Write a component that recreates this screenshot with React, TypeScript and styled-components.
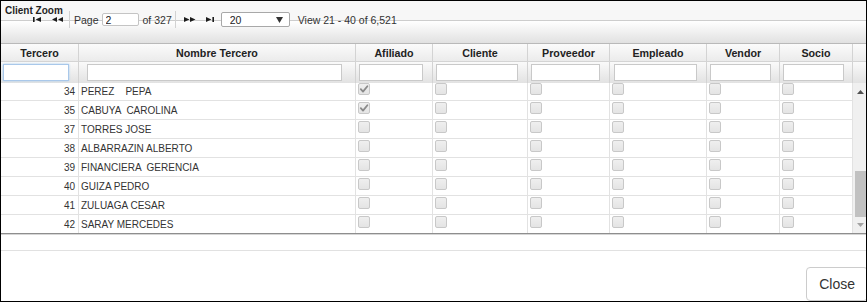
import React from 'react';
import styled, { createGlobalStyle } from 'styled-components';

const GlobalStyle = createGlobalStyle`
  html, body {
    margin: 0;
    padding: 0;
    background: #ffffff;
  }
  body {
    font-family: 'Liberation Sans', Arial, sans-serif;
  }
`;

type Column = {
  label: string;
  width: number;
  inLeft: number;
  inWidth: number;
  focused?: boolean;
};

type Tercero = {
  id: number;
  name: string;
  afiliado: boolean;
};

const columns: Column[] = [
  { label: 'Tercero', width: 78, inLeft: 2, inWidth: 66, focused: true },
  { label: 'Nombre Tercero', width: 277, inLeft: 8, inWidth: 255 },
  { label: 'Afiliado', width: 77, inLeft: 3, inWidth: 64 },
  { label: 'Cliente', width: 95, inLeft: 3, inWidth: 82 },
  { label: 'Proveedor', width: 82, inLeft: 3, inWidth: 69 },
  { label: 'Empleado', width: 97, inLeft: 4, inWidth: 83 },
  { label: 'Vendor', width: 73, inLeft: 3, inWidth: 61 },
  { label: 'Socio', width: 73, inLeft: 3, inWidth: 61 },
];

const rows: Tercero[] = [
  { id: 34, name: 'PEREZ    PEPA', afiliado: true },
  { id: 35, name: 'CABUYA  CAROLINA', afiliado: true },
  { id: 37, name: 'TORRES JOSE', afiliado: false },
  { id: 38, name: 'ALBARRAZIN ALBERTO', afiliado: false },
  { id: 39, name: 'FINANCIERA  GERENCIA', afiliado: false },
  { id: 40, name: 'GUIZA PEDRO', afiliado: false },
  { id: 41, name: 'ZULUAGA CESAR', afiliado: false },
  { id: 42, name: 'SARAY MERCEDES', afiliado: false },
];

const template = columns.map((c) => `${c.width}px`).join(' ');
const SCROLL_OFFSET = 1;

const Frame = styled.div`
  width: 867px;
  height: 302px;
  box-sizing: border-box;
  border: 1px solid #000000;
  overflow: hidden;
  display: flex;
  flex-direction: column;
  background: #ffffff;
  color: #333333;
`;

const TopBar = styled.div`
  flex: none;
  height: 42px;
  border-bottom: 1px solid #b9b9b9;
  background: linear-gradient(
    to bottom,
    #f7f7f7 0,
    #f7f7f7 19px,
    #cdcdcd 19px,
    #cdcdcd 20px,
    #ffffff 20px,
    #e1e1e1 100%
  );
`;

const Caption = styled.div`
  padding: 4px 0 0 4px;
  height: 12px;
  font-size: 10px;
  line-height: 12px;
  font-weight: 700;
  color: #1f1f1f;
`;

const Pager = styled.div`
  display: flex;
  align-items: center;
  height: 17px;
  margin: -6px 0 0 26px;
  font-size: 10.5px;
  color: #333333;
`;

const NavButton = styled.button`
  width: 20px;
  height: 17px;
  padding: 0;
  border: none;
  background: transparent;
  display: flex;
  align-items: center;
  justify-content: center;
  color: #1c1c1c;
  cursor: pointer;
`;

const Separator = styled.span<{ $before: number; $after: number }>`
  width: 1px;
  height: 17px;
  background: #d2d2d2;
  margin: 0 ${(p) => p.$after}px 0 ${(p) => p.$before}px;
`;

const PagerText = styled.span<{ $gap?: number }>`
  margin-left: ${(p) => p.$gap ?? 0}px;
  padding-top: 1px;
  white-space: nowrap;
`;

const PageInput = styled.input`
  width: 37px;
  height: 13px;
  box-sizing: border-box;
  margin: 0 0 0 3px;
  padding: 0 3px;
  border: 1px solid #c4c4c4;
  border-radius: 2px;
  font-family: inherit;
  font-size: 10.5px;
  color: #222222;
  background: #ffffff;
`;

const SelectBox = styled.label`
  display: flex;
  align-items: center;
  width: 69px;
  height: 15px;
  box-sizing: border-box;
  margin-left: 1px;
  padding: 0 6px 0 8px;
  border: 1px solid #a8a8a8;
  border-radius: 2px;
  background: #ffffff;
`;

const SelectControl = styled.select`
  flex: 1;
  min-width: 0;
  appearance: none;
  border: none;
  outline: none;
  padding: 0;
  background: transparent;
  font-family: inherit;
  font-size: 10.5px;
  color: #222222;
`;

const HeaderRow = styled.div`
  display: grid;
  grid-template-columns: ${template} 13px;
  height: 17px;
  border-bottom: 1px solid #d4d4d4;
  background: linear-gradient(to bottom, #fbfbfb, #ebebeb);
`;

const HeaderCell = styled.div`
  border-right: 1px solid #d3d3d3;
  padding-top: 2px;
  text-align: center;
  font-size: 10.7px;
  line-height: 15px;
  font-weight: 700;
  color: #222222;
  white-space: nowrap;
  overflow: hidden;
`;

const FilterRow = styled.div`
  display: grid;
  grid-template-columns: ${template} 13px;
  height: 22px;
  background: linear-gradient(to bottom, #fafafa, #e2e2e2);
`;

const FilterCell = styled.div`
  border-right: 1px solid #d3d3d3;
  padding-top: 2px;
`;

const FilterInput = styled.input<{ $left: number; $width: number; $focused?: boolean }>`
  display: block;
  width: ${(p) => p.$width}px;
  height: 17px;
  box-sizing: border-box;
  margin: 0 0 0 ${(p) => p.$left}px;
  padding: 0 3px;
  border: 1px solid ${(p) => (p.$focused ? '#a9c8ea' : '#c9c9c9')};
  box-shadow: ${(p) => (p.$focused ? '0 0 2px #a9cdf0' : 'none')};
  background: #ffffff;
  font-family: inherit;
  font-size: 10px;
  outline: none;
`;

const BodyWrap = styled.div`
  display: flex;
  height: 150px;
  flex: none;
`;

const RowsViewport = styled.div`
  width: 852px;
  overflow: hidden;
`;

const RowsList = styled.div``;

const DataRow = styled.div`
  display: grid;
  grid-template-columns: ${template};
  height: 19px;
  box-sizing: border-box;
  border-bottom: 1px solid #e2e2e2;
`;

const DataCell = styled.div<{ $align?: 'left' | 'right' }>`
  border-right: 1px solid #e2e2e2;
  padding: ${(p) => (p.$align === 'right' ? '1px 3px 0 2px' : '1px 2px 0')};
  text-align: ${(p) => p.$align ?? 'left'};
  font-size: 10px;
  line-height: 17px;
  color: #333333;
  white-space: pre;
  overflow: hidden;
`;

const CheckCell = styled.div`
  border-right: 1px solid #e2e2e2;
  padding: 1px 0 0 2px;
`;

const CheckBox = styled.span`
  display: flex;
  align-items: center;
  justify-content: center;
  width: 12px;
  height: 12px;
  box-sizing: border-box;
  border: 1px solid #c8c8c8;
  border-radius: 2px;
  background: linear-gradient(to bottom, #efefef, #e4e4e4);
`;

const ScrollTrack = styled.div`
  width: 13px;
  box-sizing: border-box;
  padding-left: 2px;
  background: #f0f0f0;
  display: flex;
  flex-direction: column;
`;

const ScrollArrow = styled.div<{ $height: number; $dim?: boolean }>`
  height: ${(p) => p.$height}px;
  display: flex;
  align-items: center;
  justify-content: center;
  color: ${(p) => (p.$dim ? '#a3a3a3' : '#505050')};
`;

const ScrollThumb = styled.div`
  margin-top: auto;
  height: 46px;
  background: #c1c1c1;
`;

const GridBottom = styled.div`
  flex: none;
  height: 16px;
  border-top: 1px solid #8e8e8e;
  border-bottom: 1px solid #e1e1e1;
  box-shadow: inset 0 1px 0 #d6d6d6;
`;

const Footer = styled.div`
  flex: 1;
  display: flex;
  justify-content: flex-end;
  align-items: flex-start;
  padding-top: 16px;
`;

const CloseButton = styled.button`
  flex: none;
  margin-right: -2px;
  padding: 6px 12px;
  height: 34px;
  box-sizing: border-box;
  border: 1px solid #cccccc;
  border-radius: 4px;
  background: #ffffff;
  color: #333333;
  font-family: 'Liberation Sans', Arial, sans-serif;
  font-size: 14px;
  line-height: 20px;
  cursor: pointer;
`;

const FirstIcon = () => (
  <svg width="8" height="5" viewBox="0 0 8 5">
    <rect x="0" y="0" width="1.6" height="5" fill="currentColor" />
    <path d="M8 0 L8 5 L2.6 2.5 Z" fill="currentColor" />
  </svg>
);

const PrevIcon = () => (
  <svg width="11" height="5" viewBox="0 0 11 5">
    <path d="M5 0 L5 5 L0 2.5 Z M11 0 L11 5 L6 2.5 Z" fill="currentColor" />
  </svg>
);

const NextIcon = () => (
  <svg width="12" height="5" viewBox="0 0 12 5">
    <path d="M0 0 L0 5 L5.5 2.5 Z M6 0 L6 5 L11.5 2.5 Z" fill="currentColor" />
  </svg>
);

const LastIcon = () => (
  <svg width="8" height="5" viewBox="0 0 8 5">
    <path d="M0 0 L0 5 L5.4 2.5 Z" fill="currentColor" />
    <rect x="6.4" y="0" width="1.6" height="5" fill="currentColor" />
  </svg>
);

const DownTriangle = ({ w, h }: { w: number; h: number }) => (
  <svg width={w} height={h} viewBox={`0 0 ${w} ${h}`}>
    <path d={`M0 0 L${w} 0 L${w / 2} ${h} Z`} fill="currentColor" />
  </svg>
);

const UpTriangle = ({ w, h }: { w: number; h: number }) => (
  <svg width={w} height={h} viewBox={`0 0 ${w} ${h}`}>
    <path d={`M0 ${h} L${w} ${h} L${w / 2} 0 Z`} fill="currentColor" />
  </svg>
);

const CheckMark = () => (
  <svg width="10" height="10" viewBox="0 0 10 10">
    <path
      d="M1.8 5.2 L4 7.6 L8.4 2.2"
      fill="none"
      stroke="#8a8a8a"
      strokeWidth="1.8"
      strokeLinecap="round"
      strokeLinejoin="round"
    />
  </svg>
);

const Check: React.FC<{ checked?: boolean }> = ({ checked }) => (
  <CheckBox role="checkbox" aria-checked={!!checked} aria-disabled>
    {checked && <CheckMark />}
  </CheckBox>
);

export default function App() {
  return (
    <>
      <GlobalStyle />
      <Frame>
        <TopBar>
          <Caption>Client Zoom</Caption>
          <Pager>
            <NavButton aria-label="Primera">
              <FirstIcon />
            </NavButton>
            <NavButton aria-label="Anterior">
              <PrevIcon />
            </NavButton>
            <Separator $before={2} $after={4} />
            <PagerText>Page</PagerText>
            <PageInput defaultValue="2" />
            <PagerText $gap={4}>of 327</PagerText>
            <Separator $before={3} $after={4} />
            <NavButton aria-label="Siguiente">
              <NextIcon />
            </NavButton>
            <NavButton aria-label="Ultima">
              <LastIcon />
            </NavButton>
            <SelectBox>
              <SelectControl defaultValue="20">
                <option value="10">10</option>
                <option value="20">20</option>
                <option value="50">50</option>
              </SelectControl>
              <DownTriangle w={7} h={6} />
            </SelectBox>
            <PagerText $gap={8}>View 21 - 40 of 6,521</PagerText>
          </Pager>
        </TopBar>

        <HeaderRow>
          {columns.map((col) => (
            <HeaderCell key={col.label}>{col.label}</HeaderCell>
          ))}
          <div />
        </HeaderRow>

        <FilterRow>
          {columns.map((col) => (
            <FilterCell key={col.label}>
              <FilterInput
                $left={col.inLeft}
                $width={col.inWidth}
                $focused={col.focused}
                aria-label={`Filtrar ${col.label}`}
              />
            </FilterCell>
          ))}
          <div />
        </FilterRow>

        <BodyWrap>
          <RowsViewport>
            <RowsList style={{ marginTop: -SCROLL_OFFSET }}>
              {rows.map((row) => (
                <DataRow key={row.id}>
                  <DataCell $align="right">{row.id}</DataCell>
                  <DataCell>{row.name}</DataCell>
                  <CheckCell>
                    <Check checked={row.afiliado} />
                  </CheckCell>
                  <CheckCell>
                    <Check />
                  </CheckCell>
                  <CheckCell>
                    <Check />
                  </CheckCell>
                  <CheckCell>
                    <Check />
                  </CheckCell>
                  <CheckCell>
                    <Check />
                  </CheckCell>
                  <CheckCell>
                    <Check />
                  </CheckCell>
                </DataRow>
              ))}
            </RowsList>
          </RowsViewport>
          <ScrollTrack>
            <ScrollArrow $height={17}>
              <UpTriangle w={7} h={4} />
            </ScrollArrow>
            <ScrollThumb />
            <ScrollArrow $height={16} $dim>
              <DownTriangle w={7} h={4} />
            </ScrollArrow>
          </ScrollTrack>
        </BodyWrap>

        <GridBottom />

        <Footer>
          <CloseButton>Close</CloseButton>
        </Footer>
      </Frame>
    </>
  );
}
